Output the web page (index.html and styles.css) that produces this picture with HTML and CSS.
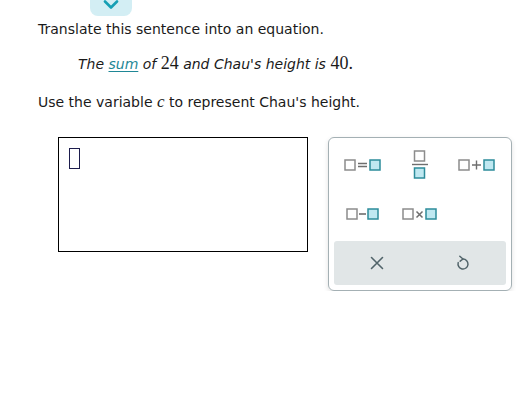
FILE: index.html
```html
<!DOCTYPE html>
<html>
<head>
<meta charset="utf-8">
<link rel="stylesheet" href="styles.css">
</head>
<body>
<div class="tab">
  <svg width="16" height="10" viewBox="0 0 16 10"><path d="M2 1.5 L8 7.5 L14 1.5" fill="none" stroke="#169fb4" stroke-width="2.6" stroke-linecap="round" stroke-linejoin="round"/></svg>
</div>
<p class="line first">Translate this sentence into an equation.</p>
<p class="sentence">The <span class="link">sum</span> of <span class="num">24</span> and Chau's height is <span class="num">40.</span></p>
<p class="line">Use the variable <span class="var">c</span> to represent Chau's height.</p>
<div class="work">
  <div class="answer"><span class="cursor"></span></div>
  <div class="palette">
    <div class="keys">
      <button class="key"><svg width="38" height="14" viewBox="0 0 38 14"><rect x="1" y="2" width="10" height="10" fill="#fff" stroke="#8c8c8c" stroke-width="1.5"/><path d="M14 5.5H23M14 8.5H23" stroke="#6e6e6e" stroke-width="1.4"/><rect x="26" y="2" width="10" height="10" fill="#bfe8f1" stroke="#2d8c9a" stroke-width="1.5"/></svg></button>
      <button class="key"><svg width="18" height="30" viewBox="0 0 18 30"><rect x="3.5" y="1" width="10" height="10" fill="#fff" stroke="#8c8c8c" stroke-width="1.5"/><path d="M1 14.5H17" stroke="#6e6e6e" stroke-width="1.4"/><rect x="3.5" y="18" width="10" height="10" fill="#bfe8f1" stroke="#2d8c9a" stroke-width="1.5"/></svg></button>
      <button class="key"><svg width="38" height="14" viewBox="0 0 38 14"><rect x="1" y="2" width="10" height="10" fill="#fff" stroke="#8c8c8c" stroke-width="1.5"/><path d="M14 7H23M18.5 2.5V11.5" stroke="#6e6e6e" stroke-width="1.4"/><rect x="26" y="2" width="10" height="10" fill="#bfe8f1" stroke="#2d8c9a" stroke-width="1.5"/></svg></button>
      <button class="key"><svg width="34" height="14" viewBox="0 0 34 14"><rect x="1" y="2" width="10" height="10" fill="#fff" stroke="#8c8c8c" stroke-width="1.5"/><path d="M13 7H20" stroke="#6e6e6e" stroke-width="1.6"/><rect x="22" y="2" width="10" height="10" fill="#bfe8f1" stroke="#2d8c9a" stroke-width="1.5"/></svg></button>
      <button class="key"><svg width="36" height="14" viewBox="0 0 36 14"><rect x="1" y="2" width="10" height="10" fill="#fff" stroke="#8c8c8c" stroke-width="1.5"/><path d="M14.5 4.5L20.5 10.5M20.5 4.5L14.5 10.5" stroke="#6e6e6e" stroke-width="1.5"/><rect x="24" y="2" width="10" height="10" fill="#bfe8f1" stroke="#2d8c9a" stroke-width="1.5"/></svg></button>
    </div>
    <div class="actions">
      <button class="act"><svg width="14" height="14" viewBox="0 0 14 14"><path d="M1.5 1.5L12.5 12.5M12.5 1.5L1.5 12.5" stroke="#51646a" stroke-width="1.6" stroke-linecap="round"/></svg></button>
      <button class="act"><svg width="14" height="16" viewBox="0 0 14 16"><path d="M7 4 A5 5 0 1 1 2.2 7.6" fill="none" stroke="#51646a" stroke-width="1.5" stroke-linecap="round"/><path d="M3.8 1.2 L7 4 L4.2 6.2" fill="none" stroke="#51646a" stroke-width="1.5" stroke-linecap="round" stroke-linejoin="round"/></svg></button>
    </div>
  </div>
</div>
</body>
</html>
```
FILE: styles.css
```css
html, body {
  margin: 0;
  padding: 0;
  background: #ffffff;
}
body {
  font-family: "DejaVu Sans", Verdana, sans-serif;
  font-size: 14px;
  color: #1a1a1a;
}
.tab {
  margin-left: 90px;
  width: 42px;
  height: 16px;
  background: #d3eef4;
  border-radius: 0 0 8px 8px;
  display: flex;
  justify-content: center;
  align-items: flex-start;
}
.line {
  margin: 0 0 0 38px;
  line-height: 20px;
}
.first {
  margin-top: 3px;
}
.sentence {
  margin: 13px 0 17px 78px;
  font-style: italic;
  line-height: 22px;
}
.link {
  color: #1f8796;
  text-decoration: underline;
  text-underline-offset: 2px;
}
.num {
  font-family: "Liberation Serif", "Times New Roman", serif;
  font-style: normal;
  font-size: 18px;
}
.var {
  font-family: "Liberation Serif", "Times New Roman", serif;
  font-style: italic;
  font-size: 17px;
}
.work {
  display: flex;
  align-items: flex-start;
  gap: 21px;
  margin: 25px 0 0 58px;
}
.answer {
  box-sizing: border-box;
  width: 250px;
  height: 115px;
  border: 1px solid #000;
  padding: 10px 0 0 10px;
}
.cursor {
  display: block;
  box-sizing: border-box;
  width: 11px;
  height: 21px;
  border: 1.5px solid #1d1d4d;
}
.palette {
  box-sizing: border-box;
  width: 184px;
  height: 154px;
  margin-left: -1px;
  border: 1px solid #a4b0b4;
  border-radius: 6px;
  box-shadow: 0 2px 5px rgba(0, 0, 0, 0.12);
  padding: 2px 5px 5px;
  display: flex;
  flex-direction: column;
}
.keys {
  display: grid;
  grid-template-columns: repeat(3, 1fr);
  grid-auto-rows: 49px;
  flex: 1;
}
button {
  border: 0;
  background: transparent;
  padding: 0;
  margin: 0;
  font: inherit;
  display: flex;
  align-items: center;
  justify-content: center;
}
.actions {
  display: flex;
  height: 44px;
  background: #e1e6e7;
  border-radius: 3px;
}
.act {
  flex: 1;
}
```
